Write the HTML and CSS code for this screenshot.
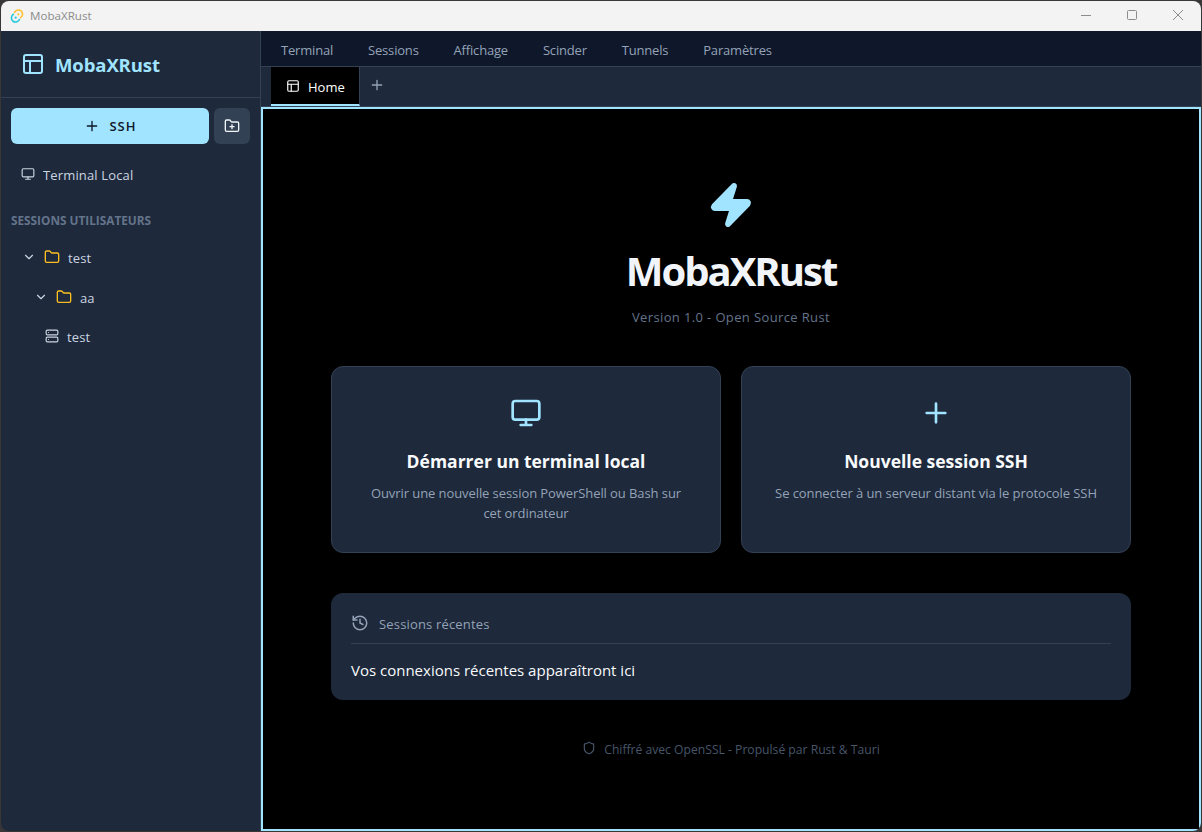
FILE: index.html
```html
<!DOCTYPE html>
<html lang="fr">
<head>
  <meta charset="UTF-8">
  <meta name="viewport" content="width=device-width, initial-scale=1.0">
  <title>MobaXRust</title>
  <link rel="stylesheet" href="styles.css">
</head>
<body>
  <!-- Icons -->
  <svg class="icon-defs">
    <symbol id="i-layout" viewBox="0 0 24 24"><rect x="3" y="3" width="18" height="18" rx="2"/><path d="M3 9h18M9 21V9"/></symbol>
    <symbol id="i-plus" viewBox="0 0 24 24"><path d="M5 12h14M12 5v14"/></symbol>
    <symbol id="i-monitor" viewBox="0 0 24 24"><rect x="2" y="3" width="20" height="14" rx="2"/><path d="M8 21h8M12 17v4"/></symbol>
    <symbol id="i-folder" viewBox="0 0 24 24"><path d="M20 20a2 2 0 0 0 2-2V8a2 2 0 0 0-2-2h-7.9a2 2 0 0 1-1.69-.9L9.6 3.9A2 2 0 0 0 7.93 3H4a2 2 0 0 0-2 2v13a2 2 0 0 0 2 2Z"/></symbol>
    <symbol id="i-folder-plus" viewBox="0 0 24 24"><path d="M12 10v6M9 13h6"/><path d="M20 20a2 2 0 0 0 2-2V8a2 2 0 0 0-2-2h-7.9a2 2 0 0 1-1.69-.9L9.6 3.9A2 2 0 0 0 7.93 3H4a2 2 0 0 0-2 2v13a2 2 0 0 0 2 2Z"/></symbol>
    <symbol id="i-chevron" viewBox="0 0 24 24"><path d="m6 9 6 6 6-6"/></symbol>
    <symbol id="i-server" viewBox="0 0 24 24"><rect x="2" y="2" width="20" height="8" rx="2"/><rect x="2" y="14" width="20" height="8" rx="2"/><path d="M6 6h.01M6 18h.01"/></symbol>
    <symbol id="i-zap" viewBox="0 0 24 24"><path d="M4 14a1 1 0 0 1-.78-1.63l9.9-10.2a.5.5 0 0 1 .86.46l-1.92 6.02A1 1 0 0 0 13 10h7a1 1 0 0 1 .78 1.63l-9.9 10.2a.5.5 0 0 1-.86-.46l1.92-6.02A1 1 0 0 0 11 14z"/></symbol>
    <symbol id="i-history" viewBox="0 0 24 24"><path d="M3 12a9 9 0 1 0 9-9 9.75 9.75 0 0 0-6.74 2.74L3 8"/><path d="M3 3v5h5M12 7v5l4 2"/></symbol>
    <symbol id="i-shield" viewBox="0 0 24 24"><path d="M20 13c0 5-3.5 7.5-7.66 8.95a1 1 0 0 1-.67-.01C7.5 20.5 4 18 4 13V6a1 1 0 0 1 1-1c2 0 4.5-1.2 6.24-2.72a1.17 1.17 0 0 1 1.52 0C14.51 3.81 17 5 19 5a1 1 0 0 1 1 1z"/></symbol>
  </svg>

  <div class="window">
    <div class="titlebar">
      <svg class="app-icon" viewBox="0 0 14 14">
        <path class="tauri-yellow" d="M4.3 4.1A4.2 4.2 0 1 1 10.1 9"/>
        <path class="tauri-cyan" d="M9.7 9.9A4.2 4.2 0 1 1 3.9 5"/>
        <circle class="dot-yellow" cx="8.3" cy="5.3" r="1.1"/>
        <circle class="dot-cyan" cx="5.7" cy="8.7" r="1.1"/>
      </svg>
      <span class="window-title">MobaXRust</span>
      <div class="window-controls">
        <svg viewBox="0 0 12 12"><path d="M1 6.5h10"/></svg>
        <svg viewBox="0 0 12 12"><rect x="1.5" y="1.5" width="9" height="9" rx="1"/></svg>
        <svg viewBox="0 0 12 12"><path d="M1 1l10 10M11 1L1 11"/></svg>
      </div>
    </div>

    <div class="app">
      <aside class="sidebar">
        <div class="sidebar-header">
          <svg class="icon icon-24"><use href="#i-layout"/></svg>
          <span class="brand">MobaXRust</span>
        </div>
        <div class="sidebar-content">
          <div class="actions">
            <button class="btn-ssh"><svg class="icon icon-16"><use href="#i-plus"/></svg><span>SSH</span></button>
            <button class="btn-folder"><svg class="icon icon-16"><use href="#i-folder-plus"/></svg></button>
          </div>
          <div class="item local"><svg class="icon icon-14"><use href="#i-monitor"/></svg><span>Terminal Local</span></div>
          <div class="section-title">Sessions utilisateurs</div>
          <div class="tree">
            <div class="item folder"><svg class="icon icon-14"><use href="#i-chevron"/></svg><svg class="icon icon-16 yellow"><use href="#i-folder"/></svg><span>test</span></div>
            <div class="item folder nested"><svg class="icon icon-14"><use href="#i-chevron"/></svg><svg class="icon icon-16 yellow"><use href="#i-folder"/></svg><span>aa</span></div>
            <div class="item session"><svg class="icon icon-14"><use href="#i-server"/></svg><span>test</span></div>
          </div>
        </div>
      </aside>

      <main class="main">
        <nav class="menubar">
          <span>Terminal</span>
          <span>Sessions</span>
          <span>Affichage</span>
          <span>Scinder</span>
          <span>Tunnels</span>
          <span>Paramètres</span>
        </nav>
        <div class="tabs">
          <div class="tab"><svg class="icon icon-14"><use href="#i-layout"/></svg><span>Home</span></div>
          <button class="tab-add"><svg class="icon icon-16"><use href="#i-plus"/></svg></button>
        </div>

        <section class="pane">
          <div class="home">
            <svg class="icon icon-48 zap"><use href="#i-zap"/></svg>
            <h1>MobaXRust</h1>
            <p class="version">Version 1.0 - Open Source Rust</p>

            <div class="cards">
              <div class="card">
                <svg class="icon icon-32"><use href="#i-monitor"/></svg>
                <h3>Démarrer un terminal local</h3>
                <p>Ouvrir une nouvelle session PowerShell ou Bash sur cet ordinateur</p>
              </div>
              <div class="card">
                <svg class="icon icon-32"><use href="#i-plus"/></svg>
                <h3>Nouvelle session SSH</h3>
                <p>Se connecter à un serveur distant via le protocole SSH</p>
              </div>
            </div>

            <div class="recent">
              <div class="recent-header"><svg class="icon icon-18"><use href="#i-history"/></svg><span>Sessions récentes</span></div>
              <div class="recent-empty">Vos connexions récentes apparaîtront ici</div>
            </div>

            <div class="footer"><svg class="icon icon-14"><use href="#i-shield"/></svg><span>Chiffré avec OpenSSL - Propulsé par Rust &amp; Tauri</span></div>
          </div>
        </section>
      </main>
    </div>
  </div>
</body>
</html>
```

FILE: styles.css
```css
* { box-sizing: border-box; margin: 0; padding: 0; }
body { height: 832px; padding: 1px; background: #383636; font-family: "Open Sans", "Noto Sans", sans-serif; font-size: 13px; overflow: hidden; }
button { border: none; font: inherit; cursor: pointer; }

.icon-defs { display: none; }
.icon { flex: none; display: block; fill: none; stroke: currentColor; stroke-width: 2; stroke-linecap: round; stroke-linejoin: round; }
.icon-14 { width: 14px; height: 14px; }
.icon-16 { width: 16px; height: 16px; }
.icon-18 { width: 18px; height: 18px; }
.icon-24 { width: 24px; height: 24px; }
.icon-32 { width: 32px; height: 32px; }
.icon-48 { width: 48px; height: 48px; }

.window { display: flex; flex-direction: column; width: 1200px; height: 830px; border-radius: 8px; overflow: hidden; }

/* title bar */
.titlebar { display: flex; align-items: center; height: 30px; padding-left: 9px; background: #f3f3f3; }
.app-icon { width: 14px; height: 14px; margin-bottom: 1px; fill: none; stroke-width: 1.6; }
.tauri-yellow { stroke: #ffc131; }
.tauri-cyan { stroke: #24c8db; }
.dot-yellow { fill: #ffc131; }
.dot-cyan { fill: #24c8db; }
.window-title { margin-left: 6px; padding-bottom: 2px; font-size: 11.6px; color: #8c8c8c; }
.window-controls { display: flex; gap: 34px; margin-left: auto; padding: 0 17px 2px 0; }
.window-controls svg { width: 12px; height: 12px; fill: none; stroke: #8c8c8c; stroke-width: 1; }

.app { display: flex; flex: 1; min-height: 0; }

/* sidebar */
.sidebar { width: 260px; background: #1e293b; border-right: 1px solid #334155; }
.sidebar-header { display: flex; align-items: center; gap: 10px; height: 67px; padding-left: 20px; border-bottom: 1px solid #334155; color: #a0e4ff; }
.brand { font-size: 18.5px; font-weight: 700; letter-spacing: -0.1px; }
.sidebar-content { padding: 10px; }
.actions { display: flex; gap: 5px; }
.btn-ssh { display: flex; flex: 1; align-items: center; justify-content: center; gap: 9px; height: 36px; padding-left: 1px; border-radius: 6px; background: #a0e4ff; color: #0f172a; font-weight: 600; letter-spacing: 1px; }
.btn-folder { display: flex; align-items: center; justify-content: center; width: 36px; height: 36px; border-radius: 6px; background: #334155; color: #f1f5f9; }
.item { display: flex; align-items: center; gap: 8px; height: 40px; letter-spacing: 0.15px; color: #cbd5e1; }
.item span { padding-top: 2px; }
.local { margin-top: 10px; padding-left: 10px; }
.section-title { margin-top: 16px; height: 20px; line-height: 20px; font-size: 11.8px; font-weight: 700; text-transform: uppercase; color: #64748b; }
.tree { margin-top: 7px; }
.folder { padding-left: 11px; }
.nested { padding-left: 23px; }
.session { height: 38px; padding-left: 34px; }
.yellow { color: #fbbf24; }

/* menu and tabs */
.main { display: flex; flex: 1; flex-direction: column; min-width: 0; }
.menubar { display: flex; align-items: center; gap: 34.9px; height: 36px; padding: 2px 20px 0; background: #0f172a; border-bottom: 1px solid #334155; letter-spacing: -0.18px; color: #94a3b8; }
.tabs { display: flex; height: 40px; padding-left: 10px; background: #1e293b; border-bottom: 1px solid #334155; }
.tab { display: flex; align-items: center; gap: 8px; width: 89px; padding-left: 15px; background: #000; border-right: 1px solid #334155; border-bottom: 2px solid #a0e4ff; color: #fff; }
.tab span { padding-top: 2px; }
.tab-add { padding: 0 9px 3px; background: none; color: #94a3b8; }

/* home page */
.pane { flex: 1; border: 2px solid #a0e4ff; background: #000; }
.home { display: flex; flex-direction: column; align-items: center; width: 800px; margin: 0 auto; padding-top: 72px; }
.zap { fill: currentColor; color: #a0e4ff; }
h1 { margin-top: 14px; line-height: 56px; font-size: 40px; font-weight: 700; letter-spacing: -2px; color: #f1f5f9; }
.version { margin-top: 8px; line-height: 20px; letter-spacing: 0.37px; color: #64748b; }
.cards { display: grid; grid-template-columns: 1fr 1fr; gap: 20px; width: 100%; margin-top: 39px; }
.card { display: flex; flex-direction: column; align-items: center; height: 187px; padding: 30px; background: #1e293b; border: 1px solid #334155; border-radius: 12px; text-align: center; color: #a0e4ff; }
.card h3 { margin-top: 20px; line-height: 24px; font-size: 17.5px; color: #f8fafc; }
.card p { margin-top: 10px; line-height: 20px; letter-spacing: -0.08px; color: #94a3b8; }
.recent { width: 100%; height: 107px; margin-top: 40px; padding: 20px; background: #1e293b; border-radius: 12px; }
.recent-header { display: flex; align-items: center; gap: 10px; height: 31px; padding-bottom: 10px; border-bottom: 1px solid #334155; letter-spacing: 0.17px; color: #94a3b8; }
.recent-header span { padding-top: 2px; }
.recent-empty { margin-top: 15px; line-height: 22px; font-size: 15px; color: #f8fafc; }
.footer { display: flex; align-items: center; gap: 8px; height: 20px; margin-top: 38px; font-size: 12.15px; color: #475569; }
.footer span { padding-top: 2px; }
```
